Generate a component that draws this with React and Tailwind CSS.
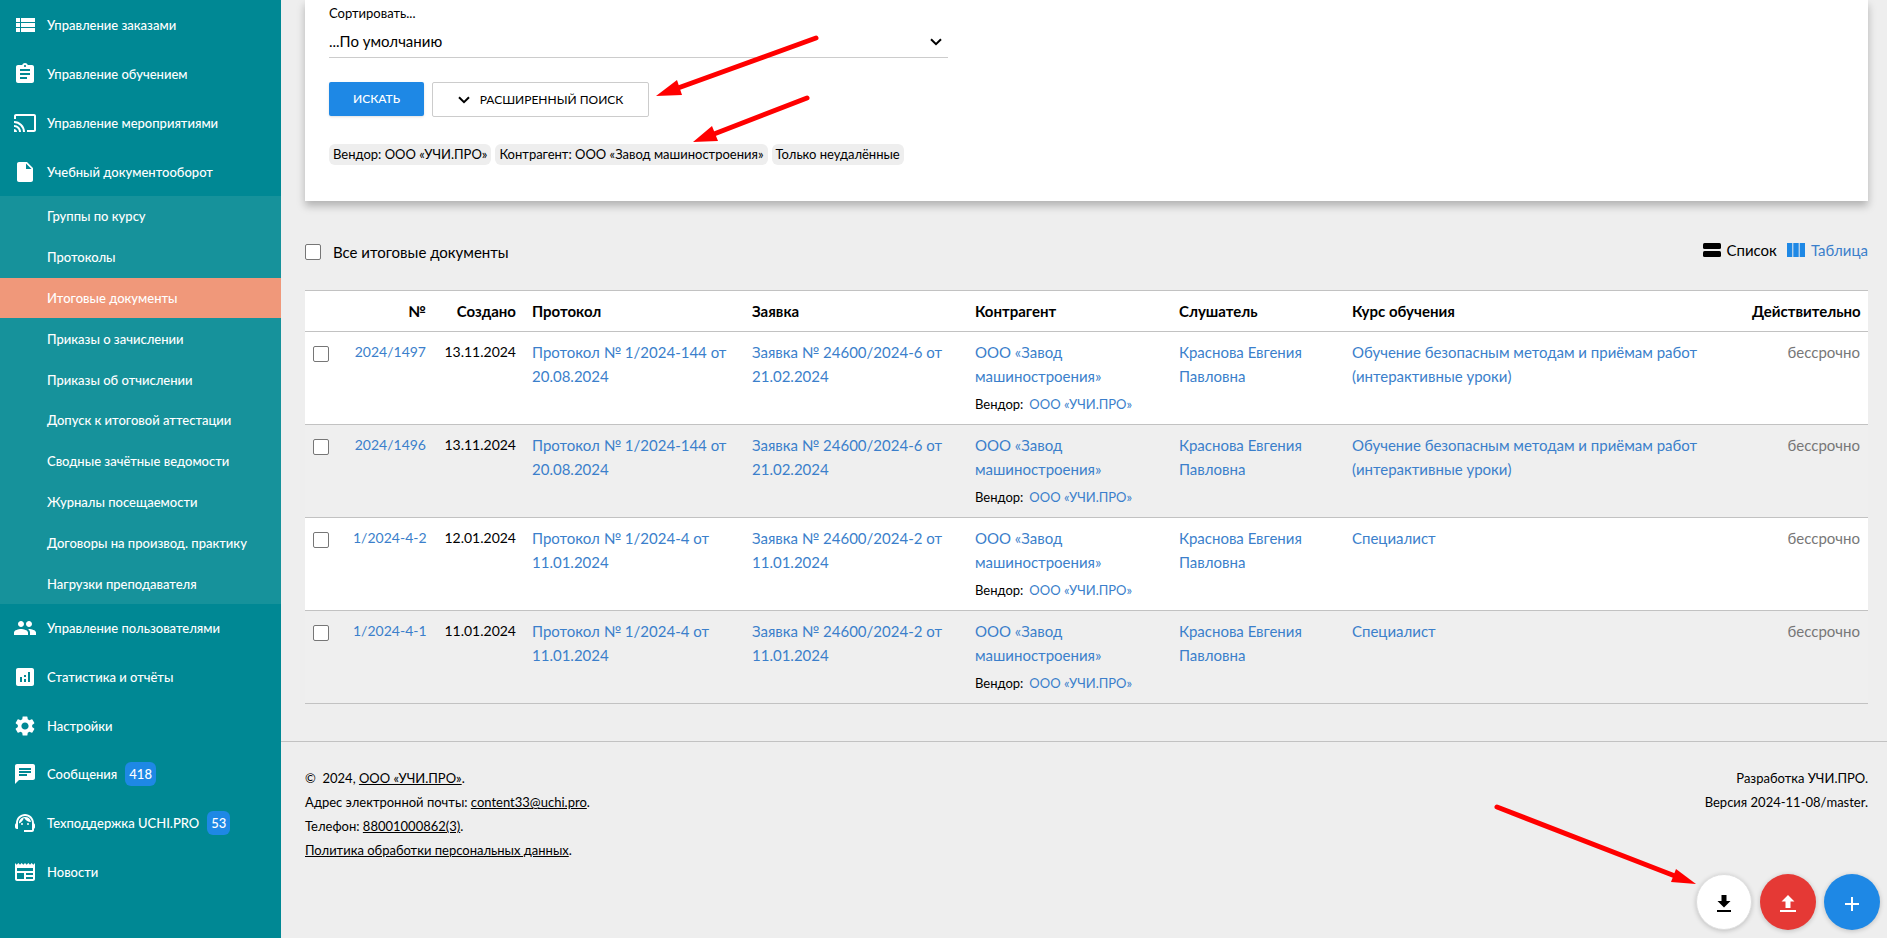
import { useState } from 'react'
import {
  MdAssignment,
  MdCast,
  MdInsertDriveFile,
  MdPeople,
  MdAnalytics,
  MdSettings,
  MdChat,
  MdSupportAgent,
  MdNewspaper,
  MdAdd,
} from 'react-icons/md'

function ListIcon({ className }) {
  return (
    <svg viewBox="0 0 24 24" className={className} fill="currentColor">
      <path d="M3 5h4v4H3zM8 5h14v4H8zM3 10h4v4H3zM8 10h14v4H8zM3 15h4v4H3zM8 15h14v4H8z" />
    </svg>
  )
}

const topMenu = [
  { label: 'Управление заказами', icon: ListIcon },
  { label: 'Управление обучением', icon: MdAssignment },
  { label: 'Управление мероприятиями', icon: MdCast },
  { label: 'Учебный документооборот', icon: MdInsertDriveFile },
]

const subMenu = [
  'Группы по курсу',
  'Протоколы',
  'Итоговые документы',
  'Приказы о зачислении',
  'Приказы об отчислении',
  'Допуск к итоговой аттестации',
  'Сводные зачётные ведомости',
  'Журналы посещаемости',
  'Договоры на производ. практику',
  'Нагрузки преподавателя',
]

const bottomMenu = [
  { label: 'Управление пользователями', icon: MdPeople },
  { label: 'Статистика и отчёты', icon: MdAnalytics },
  { label: 'Настройки', icon: MdSettings },
  { label: 'Сообщения', icon: MdChat, badge: 418 },
  { label: 'Техподдержка UCHI.PRO', icon: MdSupportAgent, badge: 53 },
  { label: 'Новости', icon: MdNewspaper },
]

const safetyCourse = 'Обучение безопасным методам и приёмам работ (интерактивные уроки)'

const documents = [
  { number: '2024/1497', created: '13.11.2024', protocol: 'Протокол № 1/2024-144 от 20.08.2024', request: 'Заявка № 24600/2024-6 от 21.02.2024', course: safetyCourse },
  { number: '2024/1496', created: '13.11.2024', protocol: 'Протокол № 1/2024-144 от 20.08.2024', request: 'Заявка № 24600/2024-6 от 21.02.2024', course: safetyCourse },
  { number: '1/2024-4-2', created: '12.01.2024', protocol: 'Протокол № 1/2024-4 от 11.01.2024', request: 'Заявка № 24600/2024-2 от 11.01.2024', course: 'Специалист' },
  { number: '1/2024-4-1', created: '11.01.2024', protocol: 'Протокол № 1/2024-4 от 11.01.2024', request: 'Заявка № 24600/2024-2 от 11.01.2024', course: 'Специалист' },
]

const filters = ['Вендор: ООО «УЧИ.ПРО»', 'Контрагент: ООО «Завод машиностроения»', 'Только неудалённые']

function Chevron({ className }) {
  return (
    <svg viewBox="0 0 12 8" className={className} fill="none" stroke="currentColor" strokeWidth="2">
      <path d="M1 1.2 6 6.2 11 1.2" />
    </svg>
  )
}

function Checkbox({ id, label, checked, onChange }) {
  return (
    <input
      id={id}
      type="checkbox"
      aria-label={label}
      checked={checked}
      onChange={onChange}
      className="block w-4 h-4 shrink-0 appearance-none rounded-xs border border-[#767676] bg-white checked:bg-[#1e88e5]"
    />
  )
}

function MenuItem({ item }) {
  const Icon = item.icon
  return (
    <a href="#" className="flex items-center pl-[13px]">
      <Icon className="w-6 h-6 shrink-0" />
      <span className="ml-[10px]">{item.label}</span>
      {item.badge && (
        <span className="ml-2 px-1 rounded-md bg-[#1e88e5] leading-6">{item.badge}</span>
      )}
    </a>
  )
}

function Sidebar() {
  return (
    <nav className="w-[281px] shrink-0 pt-px bg-[#008894] text-white text-[13px] font-medium">
      <div className="grid auto-rows-fr h-[195px]">
        {topMenu.map((item) => (
          <MenuItem key={item.label} item={item} />
        ))}
      </div>
      <div className="grid auto-rows-fr h-[408px] bg-[#16929b]">
        {subMenu.map((label) => (
          <a
            key={label}
            href="#"
            className={
              label === 'Итоговые документы'
                ? 'flex items-center pl-[47px] bg-[#f0987a]'
                : 'flex items-center pl-[47px]'
            }
          >
            {label}
          </a>
        ))}
      </div>
      <div className="grid auto-rows-fr h-[292px]">
        {bottomMenu.map((item) => (
          <MenuItem key={item.label} item={item} />
        ))}
      </div>
    </nav>
  )
}

function SearchPanel() {
  return (
    <form
      onSubmit={(e) => e.preventDefault()}
      className="px-6 pt-[3px] pb-9 bg-white shadow-[0_5px_8px_rgba(0,0,0,0.25)]"
    >
      <label htmlFor="sort" className="block text-[13px] leading-5">
        Сортировать...
      </label>
      <div className="relative w-[619px] mt-1">
        <select id="sort" className="block w-full h-[31px] pb-[2px] appearance-none border-b border-[#cccccc] outline-none">
          <option>...По умолчанию</option>
        </select>
        <Chevron className="absolute right-[6px] top-[11px] w-3 h-2 pointer-events-none" />
      </div>
      <div className="flex items-start gap-2 mt-6 text-xs">
        <button type="submit" className="w-[95px] h-[34px] rounded-xs bg-[#1e88e5] text-white font-medium shadow-sm">
          ИСКАТЬ
        </button>
        <button
          type="button"
          className="flex items-center justify-center gap-[10px] w-[217px] h-[35px] rounded-xs border border-[#cccccc] bg-white"
        >
          <Chevron className="w-3 h-2" />
          РАСШИРЕННЫЙ ПОИСК
        </button>
      </div>
      <div className="flex gap-1 mt-[27px] text-[13px] leading-[21px]">
        {filters.map((text) => (
          <span key={text} className="px-1 rounded-md bg-[#eeeeee]">
            {text}
          </span>
        ))}
      </div>
    </form>
  )
}

function ViewSwitch() {
  return (
    <div className="flex gap-[10px]">
      <a href="#" className="flex items-center gap-[6px]">
        <svg viewBox="0 0 18 14" className="w-[18px] h-[14px]" fill="currentColor">
          <rect width="18" height="6" rx="1.5" />
          <rect y="8" width="18" height="6" rx="1.5" />
        </svg>
        Список
      </a>
      <a href="#" className="flex items-center gap-[6px] text-[#3b7fcb]">
        <svg viewBox="0 0 18 14" className="w-[18px] h-[14px]" fill="#1e88e5">
          <rect width="5.3" height="14" />
          <rect x="6.3" width="5.4" height="14" />
          <rect x="12.7" width="5.3" height="14" />
        </svg>
        Таблица
      </a>
    </div>
  )
}

function DocumentsTable({ selected, onToggle }) {
  return (
    <table className="w-full table-fixed border-y border-[#c2c2c2]">
      <thead>
        <tr className="bg-white text-left">
          <th className="w-[40px]"></th>
          <th className="w-[89px] p-2 text-right">№</th>
          <th className="w-[90px] p-2 text-right">Создано</th>
          <th className="w-[220px] p-2">Протокол</th>
          <th className="w-[223px] p-2">Заявка</th>
          <th className="w-[204px] p-2">Контрагент</th>
          <th className="w-[173px] p-2">Слушатель</th>
          <th className="p-2">Курс обучения</th>
          <th className="w-[124px] p-2 text-right">Действительно</th>
        </tr>
      </thead>
      <tbody>
        {documents.map((doc) => (
          <tr key={doc.number} className="border-t border-[#c2c2c2] bg-white even:bg-[#efefef] align-top">
            <td className="px-2 pt-[14px]">
              <Checkbox
                label={doc.number}
                checked={selected.includes(doc.number)}
                onChange={() => onToggle(doc.number)}
              />
            </td>
            <td className="p-2 text-right text-[14px] whitespace-nowrap">
              <a href="#" className="text-[#3b7fcb]">{doc.number}</a>
            </td>
            <td className="p-2 text-right text-[14px]">{doc.created}</td>
            <td className="p-2">
              <a href="#" className="text-[#3b7fcb]">{doc.protocol}</a>
            </td>
            <td className="p-2">
              <a href="#" className="text-[#3b7fcb]">{doc.request}</a>
            </td>
            <td className="p-2">
              <a href="#" className="text-[#3b7fcb]">ООО «Завод машиностроения»</a>
              <div className="flex gap-[6px] mt-1 text-[13px] leading-6">
                <span>Вендор:</span>
                <a href="#" className="text-[#3b7fcb]">ООО «УЧИ.ПРО»</a>
              </div>
            </td>
            <td className="p-2">
              <a href="#" className="text-[#3b7fcb]">Краснова Евгения Павловна</a>
            </td>
            <td className="p-2">
              <a href="#" className="text-[#3b7fcb]">{doc.course}</a>
            </td>
            <td className="p-2 text-right text-[#777777]">бессрочно</td>
          </tr>
        ))}
      </tbody>
    </table>
  )
}

function Footer() {
  return (
    <footer className="flex justify-between mt-[37px] pl-6 pr-[19px] pt-6 border-t border-[#c2c2c2] text-[13px] leading-6">
      <div>
        <p>©&nbsp; 2024, <a href="#" className="underline">ООО «УЧИ.ПРО»</a>.</p>
        <p>Адрес электронной почты: <a href="#" className="underline">content33@uchi.pro</a>.</p>
        <p>Телефон: <a href="#" className="underline">88001000862(3)</a>.</p>
        <p><a href="#" className="underline">Политика обработки персональных данных</a>.</p>
      </div>
      <div className="text-right">
        <p>Разработка УЧИ.ПРО.</p>
        <p>Версия 2024-11-08/master.</p>
      </div>
    </footer>
  )
}

function ActionButtons() {
  return (
    <div className="fixed right-[7px] bottom-2 flex gap-2 text-white">
      <button type="button" aria-label="Скачать" className="flex items-center justify-center w-14 h-14 pt-1 rounded-full border border-[#dddddd] bg-white text-black shadow-[0_1px_5px_rgba(0,0,0,0.2)]">
        <svg viewBox="0 0 16 18" className="w-4 h-[18px]" fill="currentColor">
          <path d="M5.5 0h5v6h4L8 12.5 1.5 6h4zM1 15h14v2H1z" />
        </svg>
      </button>
      <button type="button" aria-label="Загрузить" className="flex items-center justify-center w-14 h-14 pt-1 rounded-full bg-[#e53935] shadow-[0_1px_5px_rgba(0,0,0,0.2)]">
        <svg viewBox="0 0 16 18" className="w-4 h-[18px]" fill="currentColor">
          <path d="M8 0l6.5 6.5h-4v6.5h-5V6.5h-4zM0 15h16v2H0z" />
        </svg>
      </button>
      <button type="button" aria-label="Добавить" className="flex items-center justify-center w-14 h-14 pt-1 rounded-full bg-[#1e88e5] shadow-[0_1px_5px_rgba(0,0,0,0.2)]">
        <MdAdd className="w-6 h-6" />
      </button>
    </div>
  )
}

// Red pointers over the search button, the filter chip and the download button
function Pointers() {
  return (
    <svg
      width="1887"
      height="938"
      className="absolute left-0 top-0 max-w-none pointer-events-none"
      fill="#ff0000"
      stroke="#ff0000"
      strokeLinecap="round"
    >
      <g strokeWidth="5">
        <path d="M816 38 678 88" />
        <path d="M807 98 714 134" />
        <path d="M1497 807 1675 876" />
      </g>
      <g stroke="none">
        <path d="M656 96 677 80 682 95Z" />
        <path d="M693 142 712 126 718 141Z" />
        <path d="M1696 884 1676 869 1671 882Z" />
      </g>
    </svg>
  )
}

export default function App() {
  const [selected, setSelected] = useState([])

  function toggle(number) {
    setSelected((prev) => (prev.includes(number) ? prev.filter((n) => n !== number) : [...prev, number]))
  }

  function toggleAll(e) {
    setSelected(e.target.checked ? documents.map((doc) => doc.number) : [])
  }

  return (
    <div className="relative flex min-h-screen bg-[#eeeeee] font-[Lato,'Noto_Sans',sans-serif] text-[15px] leading-6 text-black">
      <Sidebar />
      <div className="flex-1 min-w-0">
        <main className="pl-6 pr-[19px]">
          <SearchPanel />
          <div className="flex items-start justify-between mt-[37px] mb-[26px]">
            <div className="flex items-center gap-3 pt-[2px]">
              <Checkbox id="all" checked={selected.length === documents.length} onChange={toggleAll} />
              <label htmlFor="all">Все итоговые документы</label>
            </div>
            <ViewSwitch />
          </div>
          <DocumentsTable selected={selected} onToggle={toggle} />
        </main>
        <Footer />
      </div>
      <ActionButtons />
      <Pointers />
    </div>
  )
}
